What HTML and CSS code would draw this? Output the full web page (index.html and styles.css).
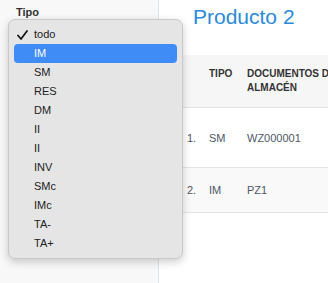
FILE: index.html
```html
<!DOCTYPE html>
<html lang="es">
<head>
  <meta charset="UTF-8">
  <meta name="viewport" content="width=device-width, initial-scale=1.0">
  <title>Producto 2</title>
  <link rel="stylesheet" href="styles.css">
</head>
<body>
  <div class="page">
    <aside class="sidebar">
      <label class="filter-label">Tipo</label>
      <div class="select-box"></div>

      <!-- lista abierta del select -->
      <ul class="dropdown">
        <li class="option checked">
          <svg class="check" width="11" height="10" viewBox="0 0 11 10"><polyline points="1,5.5 4,9 10,1" fill="none" stroke="#111" stroke-width="1.7" stroke-linecap="round" stroke-linejoin="round"/></svg>
          todo
        </li>
        <li class="option active">IM</li>
        <li class="option">SM</li>
        <li class="option">RES</li>
        <li class="option">DM</li>
        <li class="option">II</li>
        <li class="option">II</li>
        <li class="option">INV</li>
        <li class="option">SMc</li>
        <li class="option">IMc</li>
        <li class="option">TA-</li>
        <li class="option">TA+</li>
      </ul>
    </aside>

    <main class="content">
      <h1 class="title">Producto 2</h1>
      <table class="docs-table">
        <thead>
          <tr>
            <th class="col-num"></th>
            <th class="col-type">Tipo</th>
            <th class="col-doc">Documentos de almacén</th>
            <th class="col-date">Fecha</th>
          </tr>
        </thead>
        <tbody>
          <tr class="row-tall">
            <td>1.</td>
            <td>SM</td>
            <td>WZ000001</td>
            <td></td>
          </tr>
          <tr class="row-alt">
            <td>2.</td>
            <td>IM</td>
            <td>PZ1</td>
            <td></td>
          </tr>
        </tbody>
      </table>
    </main>
  </div>
</body>
</html>
```

FILE: styles.css
```css
/* base */
body {
  margin: 0;
  font-family: "Liberation Sans", Arial, sans-serif;
  background-color: #fff;
  overflow: hidden;
}

.page {
  display: flex;
  height: 283px;
}

/* columna de filtros */
.sidebar {
  position: relative;
  width: 142px;
  flex-shrink: 0;
  padding: 5px 0 0 16px;
  background-color: #f8f8f8;
  border-right: 1px solid #d9e3ec;
}

.filter-label {
  display: block;
  font-size: 11px;
  font-weight: bold;
  line-height: 14px;
  color: #333;
}

.select-box {
  margin: 4px 0 0 -6px;
  width: 135px;
  height: 22px;
  background: #fff;
  border: 1px solid #ccc;
  border-radius: 4px;
}

/* menu desplegable */
.dropdown {
  position: absolute;
  left: 8px;
  top: 19px;
  width: 163px;
  margin: 0;
  padding: 5px 5px 5px;
  list-style: none;
  background-color: #e5e5e5;
  border: 1px solid #c9c9c9;
  border-radius: 7px;
  box-shadow: 0 3px 8px rgba(0, 0, 0, 0.2);
}

.option {
  position: relative;
  height: 19px;
  line-height: 19px;
  padding-left: 20px;
  font-size: 11px;
  color: #222;
  border-radius: 4px;
}

.option.active {
  background-color: #3f8cf6;
  color: #fff;
}

.check {
  position: absolute;
  left: 3px;
  top: 5px;
}

/* contenido */
.content {
  flex: 1;
  min-width: 0;
  padding-left: 24px;
  overflow: hidden;
}

.title {
  margin: 4px 0 0 10px;
  font-size: 21px;
  font-weight: normal;
  line-height: 26px;
  color: #2b8ad7;
}

.docs-table {
  width: 300px;
  margin-top: 25px;
  border-collapse: collapse;
  table-layout: fixed;
}

.docs-table th {
  padding: 12px 4px;
  font-size: 10px;
  line-height: 14px;
  font-weight: bold;
  text-transform: uppercase;
  text-align: left;
  vertical-align: top;
  color: #333;
  background-color: #f6f6f6;
  border-bottom: 1px solid #e3e3e3;
}

.docs-table td {
  padding: 0 4px;
  font-size: 11px;
  color: #4d5866;
  border-bottom: 1px solid #e3e3e3;
}

.col-num { width: 14px; }
.col-type { width: 30px; }
.col-doc { width: 92px; }

.row-tall td { height: 59px; }

.row-alt td {
  height: 44px;
  background-color: #f9f9f9;
}
```
